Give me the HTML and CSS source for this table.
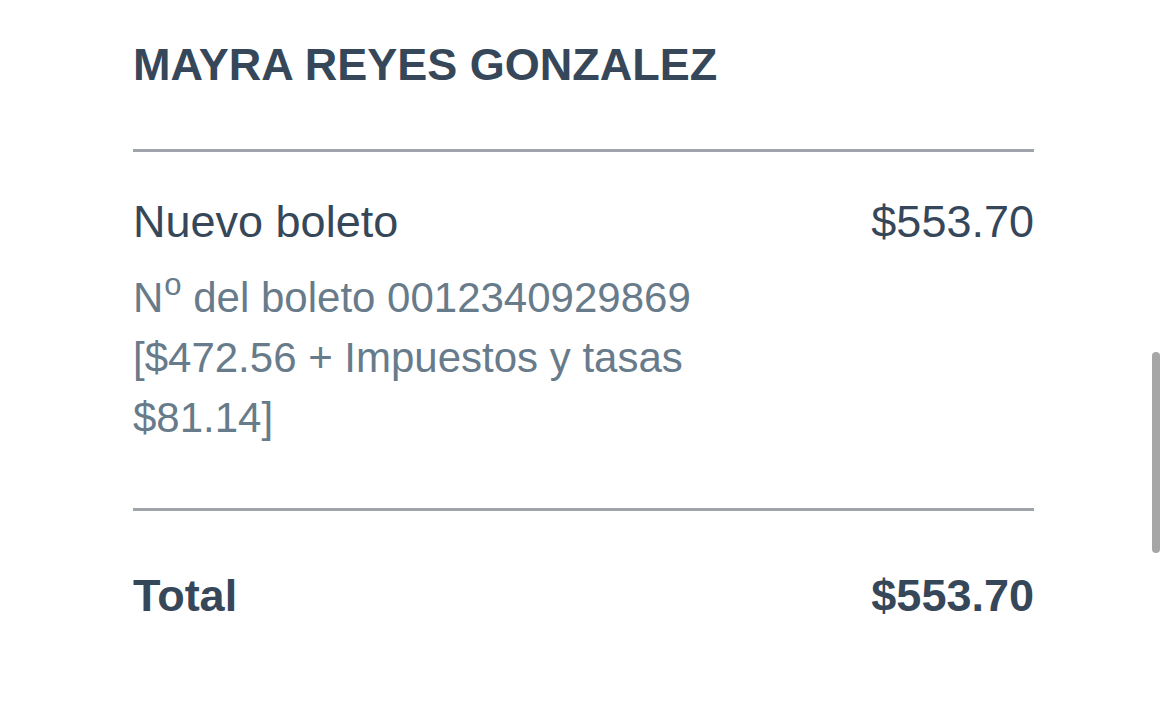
FILE: index.html
```html
<!DOCTYPE html>
<html lang="es">
<head>
<meta charset="utf-8">
<title>Boleto</title>
<link rel="stylesheet" href="styles.css">
</head>
<body>
<main class="receipt">
  <h1 class="passenger">MAYRA REYES GONZALEZ</h1>
  <hr class="rule">
  <section class="item">
    <div class="row">
      <span class="label">Nuevo boleto</span>
      <span class="amount">$553.70</span>
    </div>
    <div class="details">
      <p>N<sup>o</sup> del boleto 0012340929869</p>
      <p>[$472.56 + Impuestos y tasas</p>
      <p>$81.14]</p>
    </div>
  </section>
  <hr class="rule rule-bottom">
  <div class="row total">
    <span class="label">Total</span>
    <span class="amount">$553.70</span>
  </div>
</main>
<div class="scrollbar"></div>
</body>
</html>
```

FILE: styles.css
```css
html, body {
  margin: 0;
  padding: 0;
  background: #ffffff;
}

body {
  font-family: "Liberation Sans", Arial, Helvetica, sans-serif;
  color: #36475a;
  width: 1170px;
  height: 712px;
  overflow: hidden;
  position: relative;
}

.receipt {
  width: 901px;
  margin-left: 133px;
  padding-top: 39px;
}

.passenger {
  margin: 0;
  font-size: 45px;
  line-height: 52px;
  font-weight: 700;
}

.rule {
  border: 0;
  height: 3px;
  background: #9ea4a9;
  margin: 58px 0 0 0;
}

.item {
  padding-top: 40px;
}

.row {
  display: flex;
  justify-content: space-between;
  font-size: 45px;
  line-height: 60px;
}

.details {
  margin-top: 16px;
  color: #687b8b;
  font-size: 42px;
  line-height: 60px;
}

.details p {
  margin: 0;
}

.details sup {
  font-size: 31px;
  line-height: 0;
  vertical-align: 17px;
  margin-left: 1px;
}

.rule-bottom {
  margin-top: 60px;
}

.total {
  margin-top: 55px;
  font-weight: 700;
}

.scrollbar {
  position: absolute;
  left: 1152px;
  top: 352px;
  width: 8px;
  height: 201px;
  border-radius: 4px;
  background: #a6a6a6;
}
```
